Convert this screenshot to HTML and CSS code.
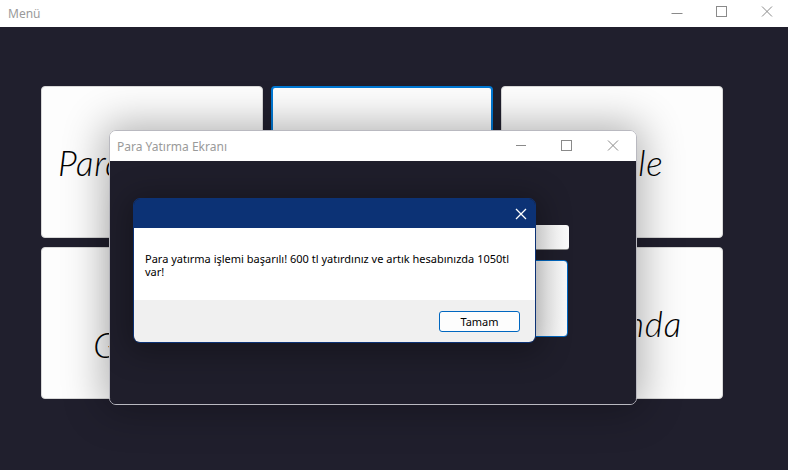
FILE: index.html
```html
<!DOCTYPE html>
<html lang="tr">
<head>
    <meta charset="UTF-8">
    <title>Menü</title>
    <link rel="stylesheet" href="styles.css">
</head>
<body>

    <!-- Main window title bar -->
    <div class="titlebar">
        <span class="title">Menü</span>
        <div class="controls">
            <svg width="45" height="27" viewBox="0 0 45 27"><line x1="18.5" y1="13.5" x2="29.5" y2="13.5" stroke="#8a8a8a" stroke-width="1"/></svg>
            <svg width="45" height="27" viewBox="0 0 45 27"><rect x="18.5" y="6.5" width="10" height="10" fill="none" stroke="#8a8a8a" stroke-width="1"/></svg>
            <svg width="45" height="27" viewBox="0 0 45 27"><path d="M19 6.5 L29 16.5 M29 6.5 L19 16.5" stroke="#8a8a8a" stroke-width="1"/></svg>
        </div>
    </div>

    <!-- Menu cards -->
    <div class="content">
        <div class="grid">
            <div class="card">Para Yatırma</div>
            <div class="card focused">Para Çekme</div>
            <div class="card">Havale</div>
            <div class="card">Kredi<br>Geçmişi</div>
            <div class="card">Bakiye</div>
            <div class="card">Hakkında</div>
        </div>
    </div>

    <!-- Deposit window -->
    <div class="window">
        <div class="win-bar">
            <span class="win-title">Para Yatırma Ekranı</span>
            <div class="controls">
                <svg width="46" height="30" viewBox="0 0 46 30"><line x1="18" y1="14.5" x2="28" y2="14.5" stroke="#8a8a8a" stroke-width="1"/></svg>
                <svg width="46" height="30" viewBox="0 0 46 30"><rect x="17.5" y="9.5" width="10" height="10" fill="none" stroke="#8a8a8a" stroke-width="1"/></svg>
                <svg width="46" height="30" viewBox="0 0 46 30"><path d="M18 9.5 L28 19.5 M28 9.5 L18 19.5" stroke="#8a8a8a" stroke-width="1"/></svg>
            </div>
        </div>
        <div class="win-body">
            <div class="amount-input"></div>
            <div class="deposit-btn"></div>
        </div>
    </div>

    <!-- Message box -->
    <div class="msgbox">
        <div class="msg-head">
            <svg width="14" height="14" viewBox="0 0 14 14"><path d="M2 2 L12 12 M12 2 L2 12" stroke="#fff" stroke-width="1.3"/></svg>
        </div>
        <div class="msg-body">
            <p>Para yatırma işlemi başarılı! 600 tl yatırdınız ve artık hesabınızda 1050tl var!</p>
        </div>
        <div class="msg-foot">
            <button class="ok-btn">Tamam</button>
        </div>
    </div>

</body>
</html>
```

FILE: styles.css
```css
body {
    margin: 0;
    width: 788px;
    height: 470px;
    background-color: #201f2d;
    font-family: "Noto Sans", sans-serif;
    overflow: hidden;
    position: relative;
}

/* Title bars */
.titlebar {
    height: 27px;
    background-color: #fff;
    display: flex;
    align-items: center;
    justify-content: space-between;
}

.title {
    padding-left: 8px;
    font-size: 12px;
    color: #9a9a9a;
}

.controls {
    display: flex;
}

.controls svg {
    display: block;
}

/* Menu grid */
.content {
    padding: 59px 0 0 41px;
}

.grid {
    display: grid;
    grid-template-columns: repeat(3, 222px);
    grid-template-rows: repeat(2, 152px);
    gap: 9px 8px;
}

.card {
    background-color: #fdfdfd;
    border: 1px solid #d8d8d8;
    border-radius: 4px;
    display: flex;
    align-items: center;
    justify-content: center;
    text-align: center;
    font-family: Lato, sans-serif;
    font-style: italic;
    font-weight: 300;
    font-size: 35px;
    letter-spacing: 0.8px;
    line-height: 42px;
    color: #000;
    box-sizing: border-box;
}

.card.focused {
    border: 2px solid #0078d4;
}

/* Deposit window (floats over the menu) */
.window {
    position: absolute;
    left: 109px;
    top: 130px;
    width: 528px;
    height: 275px;
    border: 1px solid #b9b9c0;
    border-radius: 7px;
    overflow: hidden;
    box-sizing: border-box;
    display: flex;
    flex-direction: column;
    box-shadow: 0 0 40px 6px rgba(0, 0, 0, 0.3);
}

.win-bar {
    height: 30px;
    background-color: #fff;
    display: flex;
    align-items: center;
    justify-content: space-between;
    flex-shrink: 0;
}

.win-title {
    padding-left: 7px;
    font-size: 12px;
    color: #9a9a9a;
}

.win-body {
    flex: 1;
    background-color: #1f1e2b;
    position: relative;
}

.amount-input {
    position: absolute;
    left: 380px;
    top: 64px;
    width: 79px;
    height: 25px;
    background: linear-gradient(90deg, #d8d8d8, #f8f8f8 60%, #fcfcfc);
    border-bottom: 1px solid #8a8a8a;
    border-radius: 3px;
    box-sizing: border-box;
}

.deposit-btn {
    position: absolute;
    left: 380px;
    top: 99px;
    width: 78px;
    height: 77px;
    background: linear-gradient(90deg, #d4d4d4, #f4f4f4 70%, #fafafa);
    border: 1px solid #0067c0;
    border-radius: 4px;
    box-sizing: border-box;
}

/* Message box */
.msgbox {
    position: absolute;
    left: 133px;
    top: 198px;
    width: 403px;
    height: 145px;
    border: 1px solid #0c3275;
    border-radius: 7px;
    overflow: hidden;
    box-sizing: border-box;
    display: flex;
    flex-direction: column;
    box-shadow: 0 4px 30px 6px rgba(0, 0, 0, 0.3);
}

.msg-head {
    height: 29px;
    background-color: #0c3275;
    display: flex;
    align-items: center;
    justify-content: flex-end;
    padding-right: 7px;
    flex-shrink: 0;
}

.msg-head svg {
    display: block;
}

.msg-body {
    height: 72px;
    background-color: #fff;
    padding: 24px 0 0 11px;
    box-sizing: border-box;
    flex-shrink: 0;
}

.msg-body p {
    margin: 0;
    width: 365px;
    font-size: 11px;
    line-height: 13px;
    color: #000;
}

.msg-foot {
    flex: 1;
    background-color: #f0f0f0;
    display: flex;
    justify-content: flex-end;
    align-items: flex-start;
    padding: 11px 15px 0 0;
}

.ok-btn {
    width: 81px;
    height: 21px;
    background-color: #fdfdfd;
    border: 1px solid #0067c0;
    border-radius: 3px;
    font-family: "Noto Sans", sans-serif;
    font-size: 11px;
    color: #000;
    padding: 0;
}
```
